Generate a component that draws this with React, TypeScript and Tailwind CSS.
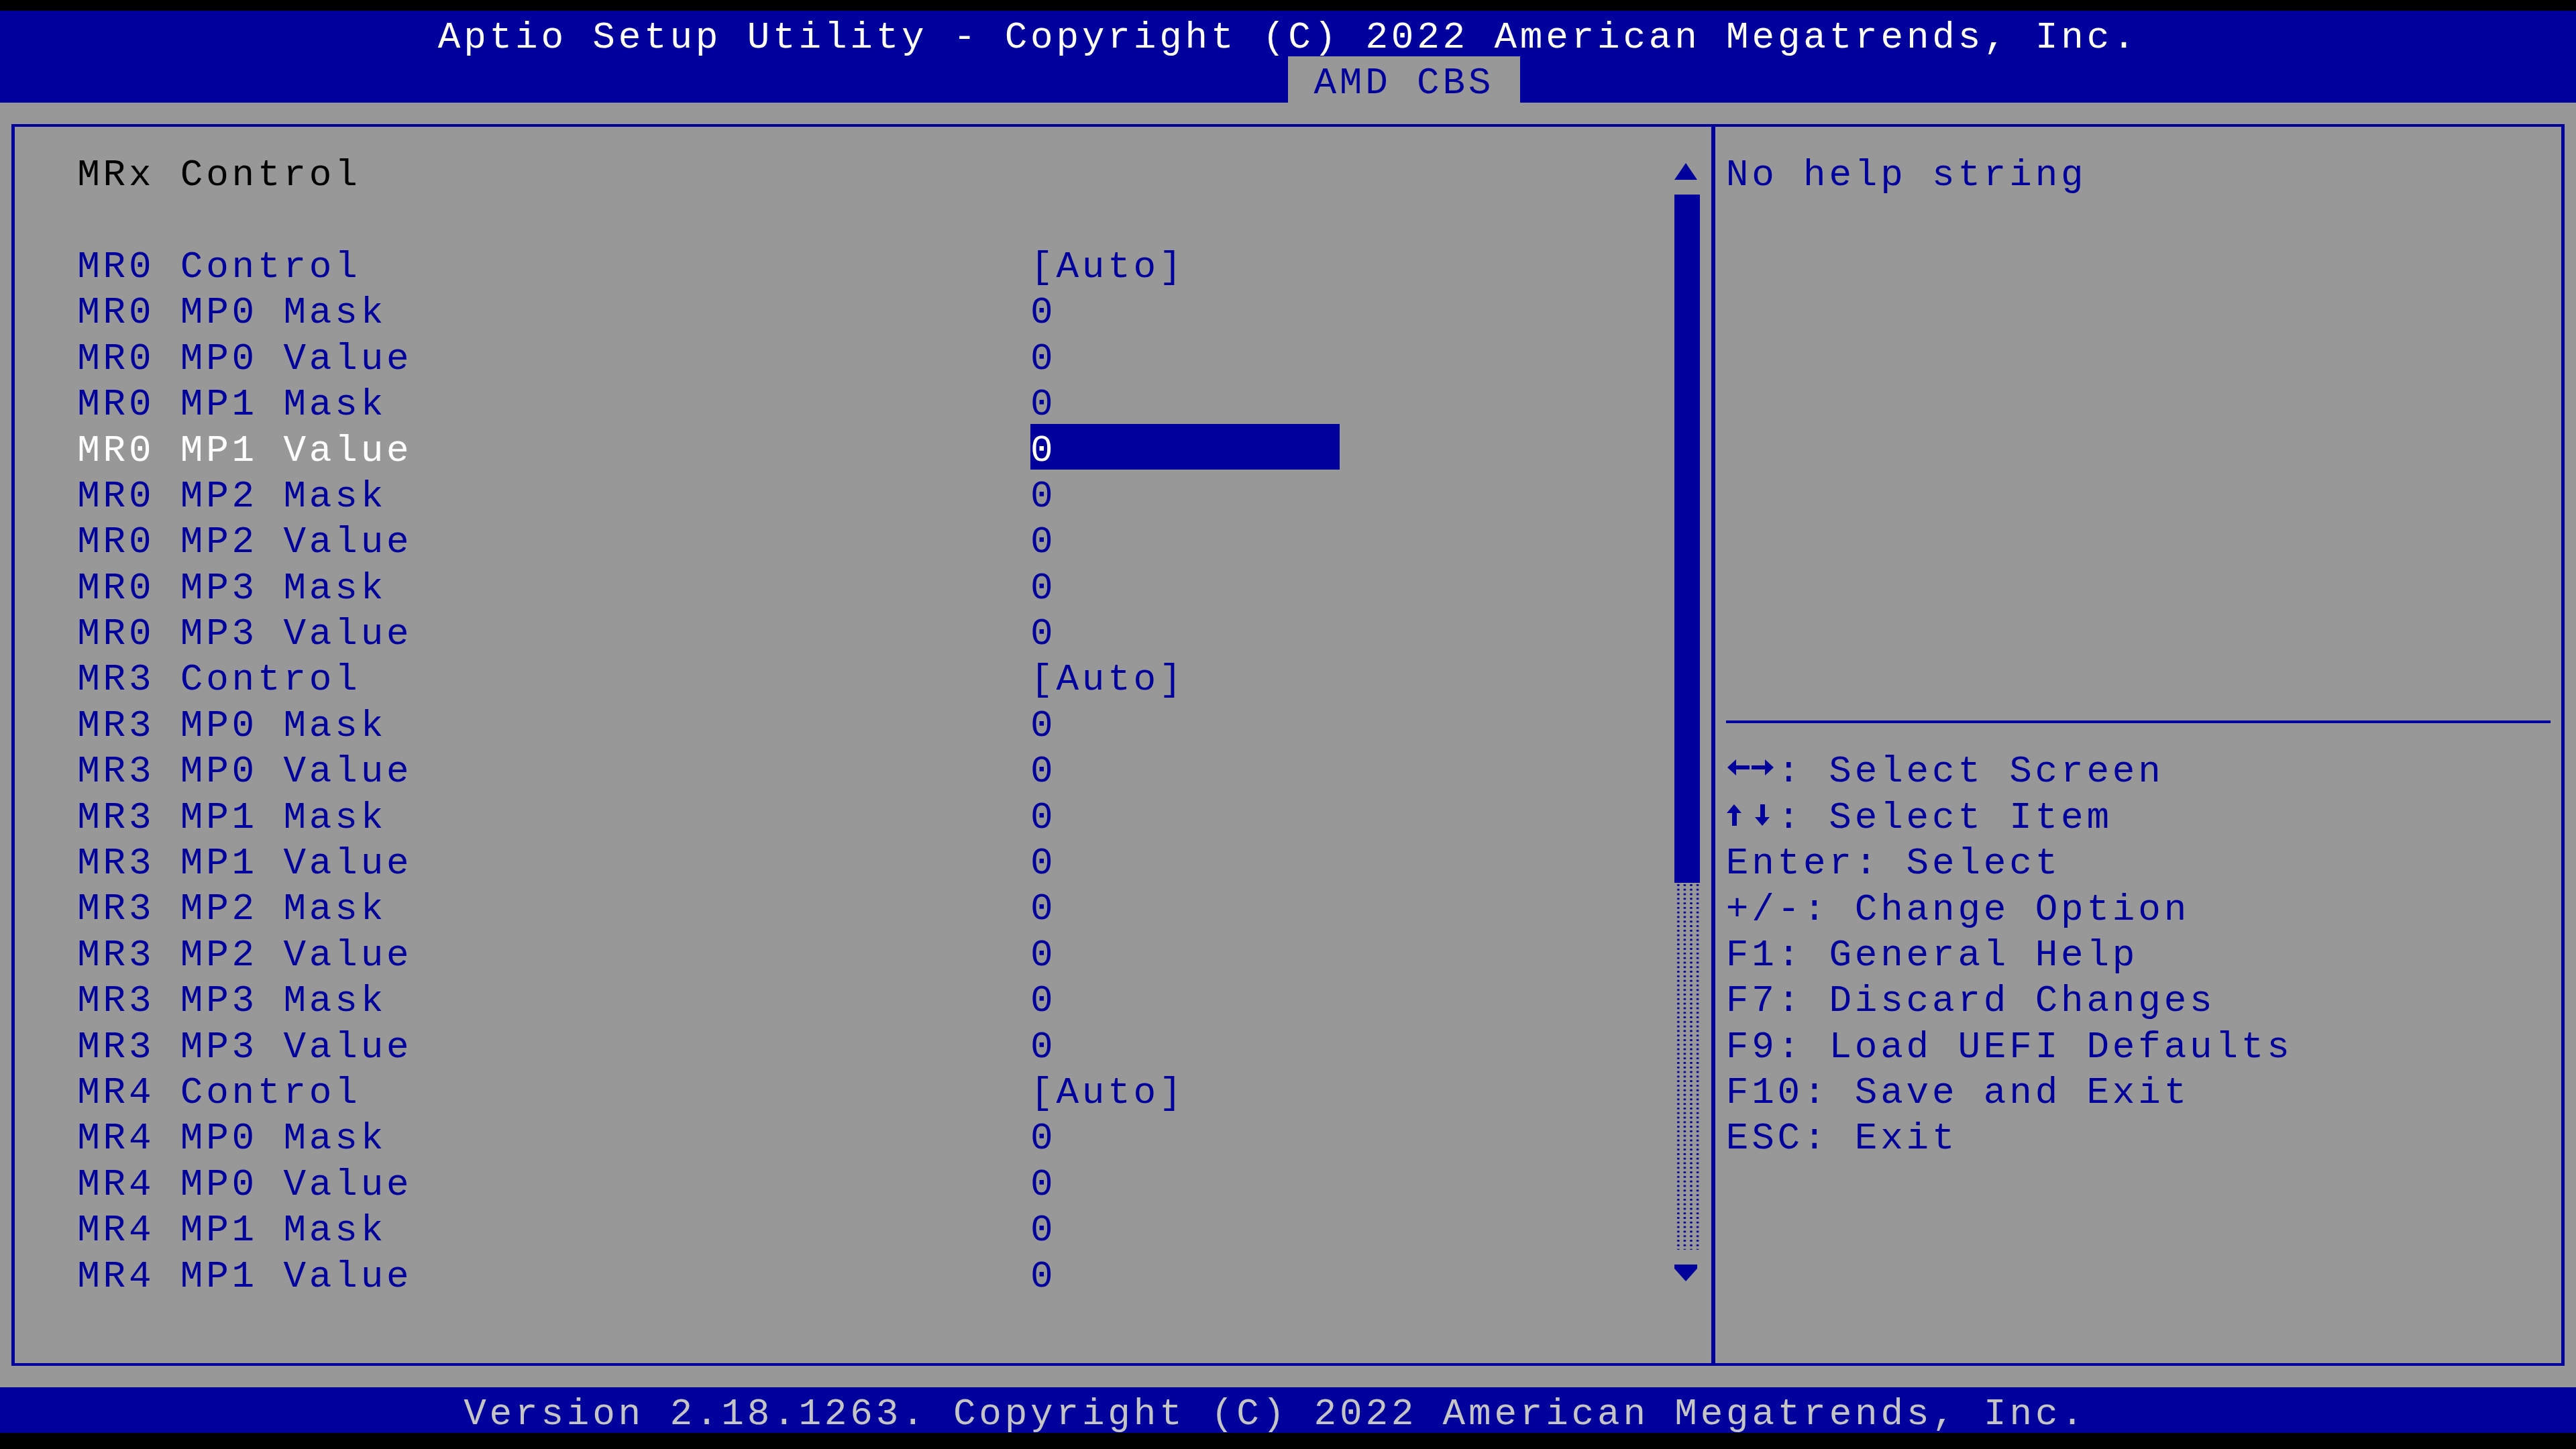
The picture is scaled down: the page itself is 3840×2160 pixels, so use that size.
const BLUE = "#00009c";

type Item = { label: string; value: string };

const items: Item[] = [
  { label: "MR0 Control", value: "[Auto]" },
  { label: "MR0 MP0 Mask", value: "0" },
  { label: "MR0 MP0 Value", value: "0" },
  { label: "MR0 MP1 Mask", value: "0" },
  { label: "MR0 MP1 Value", value: "0" },
  { label: "MR0 MP2 Mask", value: "0" },
  { label: "MR0 MP2 Value", value: "0" },
  { label: "MR0 MP3 Mask", value: "0" },
  { label: "MR0 MP3 Value", value: "0" },
  { label: "MR3 Control", value: "[Auto]" },
  { label: "MR3 MP0 Mask", value: "0" },
  { label: "MR3 MP0 Value", value: "0" },
  { label: "MR3 MP1 Mask", value: "0" },
  { label: "MR3 MP1 Value", value: "0" },
  { label: "MR3 MP2 Mask", value: "0" },
  { label: "MR3 MP2 Value", value: "0" },
  { label: "MR3 MP3 Mask", value: "0" },
  { label: "MR3 MP3 Value", value: "0" },
  { label: "MR4 Control", value: "[Auto]" },
  { label: "MR4 MP0 Mask", value: "0" },
  { label: "MR4 MP0 Value", value: "0" },
  { label: "MR4 MP1 Mask", value: "0" },
  { label: "MR4 MP1 Value", value: "0" },
];

const SELECTED = 4;

const keys: { arrows?: "lr" | "ud"; text: string }[] = [
  { arrows: "lr", text: ": Select Screen" },
  { arrows: "ud", text: ": Select Item" },
  { text: "Enter: Select" },
  { text: "+/-: Change Option" },
  { text: "F1: General Help" },
  { text: "F7: Discard Changes" },
  { text: "F9: Load UEFI Defaults" },
  { text: "F10: Save and Exit" },
  { text: "ESC: Exit" },
];

// one text cell row of the 100x31 console grid
const cell = "h-[68.4px] pt-[12px] leading-[56.4px] whitespace-pre";

// heavy two-cell arrow glyphs from the BIOS font
function KeyArrows({ dir }: { dir: "lr" | "ud" }) {
  return (
    <svg width="76.8" height="68.4" viewBox="0 0 76.8 68.4" className="shrink-0 -mt-[12px]">
      {dir === "lr" ? (
        <g fill={BLUE}>
          <polygon points="2,34 15,22 15,46" />
          <rect x="13" y="31" width="22" height="6" />
          <polygon points="71,34 58,22 58,46" />
          <rect x="38" y="31" width="22" height="6" />
        </g>
      ) : (
        <g fill={BLUE}>
          <polygon points="12,20 1,33 23,33" />
          <rect x="9" y="31" width="7" height="21" />
          <polygon points="54,52 43,39 65,39" />
          <rect x="51" y="20" width="7" height="21" />
        </g>
      )}
    </svg>
  );
}

function ScrollBar() {
  return (
    <div className="w-[38.4px] shrink-0 flex flex-col">
      <div className="h-[68.4px]">
        <svg width="38" height="68" viewBox="0 0 38 68">
          <polygon points="17,22 34,47 0,47" fill={BLUE} />
        </svg>
      </div>
      <div className="h-[1026px] bg-[#00009c]" />
      <div className="h-[547.2px] bg-[radial-gradient(circle,#00009c_1.5px,transparent_2px)] bg-[length:9.6px_6.8px] bg-[position:1px_0px]" />
      <div className="h-[68.4px]">
        <svg width="38" height="68" viewBox="0 0 38 68">
          <polygon points="0,22 34,22 34,28 17,47 0,28" fill={BLUE} />
        </svg>
      </div>
    </div>
  );
}

function ItemList() {
  return (
    <div className="w-[2474.3px] pl-[93.5px] flex flex-col">
      <div className={`${cell} text-black`}>MRx Control</div>
      <div className="h-[68.4px]" />
      {items.map((item, i) => {
        const active = i === SELECTED;
        return (
          <div key={item.label} className="flex">
            <div
              className={`${cell} w-[1420.8px] ${
                active ? "text-white" : "text-[#00009c]"
              }`}
            >
              {item.label}
            </div>
            <div
              className={`${cell} w-[460.8px] ${
                active ? "bg-[#00009c] text-white" : "text-[#00009c]"
              }`}
            >
              {item.value}
            </div>
          </div>
        );
      })}
    </div>
  );
}

function HelpPane() {
  return (
    <div className="flex-1 flex flex-col pl-[16.2px] pr-[16.7px] pt-[32.2px] text-[#00009c]">
      <div className={cell}>No help string</div>
      <div className="h-[752.4px]" />
      <div className="h-[68.4px] flex items-center">
        <div className="h-[4px] w-full bg-[#00009c]" />
      </div>
      {keys.map((k) => (
        <div key={k.text} className={`${cell} flex`}>
          {k.arrows && <KeyArrows dir={k.arrows} />}
          <span>{k.text}</span>
        </div>
      ))}
    </div>
  );
}

export default function App() {
  return (
    <div className="w-[3840px] h-[2160px] bg-black pt-[16px] font-['Liberation_Mono',monospace] text-[56px] tracking-[4.8px] overflow-hidden">
      <header className="bg-[#00009c]">
        <div className={`${cell} pl-[652.8px] text-white`}>
          Aptio Setup Utility - Copyright (C) 2022 American Megatrends, Inc.
        </div>
        <div className="h-[68.4px] pl-[1920px]">
          <div className={`${cell} w-[345.6px] pl-[38.4px] bg-[#989898] text-[#00009c]`}>
            AMD CBS
          </div>
        </div>
      </header>

      <main className="h-[1915.2px] bg-[#989898] pl-[16.7px] pt-[32.2px]">
        <div className="w-[3806.6px] h-[1850.8px] border-x-[5px] border-y-[4px] border-[#00009c] flex">
          <div className="w-[2528.9px] shrink-0 flex pt-[32.2px]">
            <ItemList />
            <ScrollBar />
          </div>
          <div className="w-[6px] shrink-0 bg-[#00009c]" />
          <HelpPane />
        </div>
      </main>

      <footer className={`${cell} bg-[#00009c] pl-[691.2px] text-[#c4c4c4]`}>
        Version 2.18.1263. Copyright (C) 2022 American Megatrends, Inc.
      </footer>
    </div>
  );
}
